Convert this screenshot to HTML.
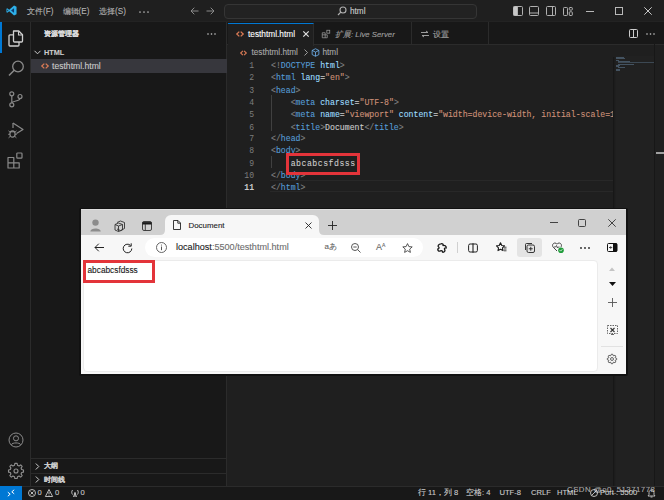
<!DOCTYPE html>
<html><head><meta charset="utf-8">
<style>
*{margin:0;padding:0;box-sizing:border-box}
html,body{width:664px;height:500px;overflow:hidden;background:#1f1f1f;font-family:"Liberation Sans",sans-serif;color:#cccccc}
.a{position:absolute}
.t{position:absolute;white-space:nowrap;line-height:1;-webkit-text-stroke:0.1px currentColor}
svg{position:absolute;overflow:visible}
#title{left:0;top:0;width:664px;height:22px;background:#1f1f1f;border-bottom:1px solid #232323}
#act{left:0;top:22px;width:31px;height:464px;background:#181818;border-right:1px solid #2b2b2b}
#side{left:31px;top:22px;width:196px;height:464px;background:#181818;border-right:1px solid #2b2b2b}
#tabs{left:227px;top:22px;width:437px;height:23px;background:#181818;border-bottom:1px solid #2b2b2b}
#status{left:0;top:486px;width:664px;height:14px;background:#181818;border-top:1px solid #2b2b2b}
.code{font-family:"Liberation Mono",monospace;font-size:8.2px;line-height:10.32px;white-space:pre;transform:scaleY(1.18);-webkit-text-stroke:0.1px currentColor;transform-origin:0 0}
.ln{position:absolute;left:227px;width:27px;text-align:right;font-family:"Liberation Mono",monospace;font-size:8.1px;color:#7d7d7d;line-height:10.32px;transform:scaleY(1.18);transform-origin:0 0}
.br{color:#808080}.tg{color:#569cd6}.at{color:#9cdcfe}.st{color:#ce9178}.tx{color:#cccccc}
#browser{left:81px;top:209px;width:545px;height:164.5px;background:#f7f7f7;overflow:hidden}
.menu{font-size:8.2px;color:#b4b4b4;top:7.7px}
</style></head><body>
<!-- ===== TITLE BAR ===== -->
<div class="a" id="title"></div>
<svg style="left:6px;top:5px" width="11" height="11" viewBox="0 0 24 24"><path d="M17.5 7 L11.2 12 L17.5 17 Z" fill="#0b3a78"/><path d="M17.5 1 L23 3.6 V20.4 L17.5 23 L7 13.5 L2.8 16.8 L1 15.9 V8.1 L2.8 7.2 L7 10.5 Z M17.5 7 L11.2 12 L17.5 17 Z M2.9 9.6 V14.4 L5.4 12 Z" fill="#2db0ea" fill-rule="evenodd"/></svg>
<div class="t menu" style="left:27px">文件(F)</div>
<div class="t menu" style="left:62.5px">编辑(E)</div>
<div class="t menu" style="left:99px">选择(S)</div>
<svg style="left:139px;top:10.5px" width="10" height="2" viewBox="0 0 10 2"><circle cx="1" cy="1" r="0.85" fill="#b4b4b4"/><circle cx="5" cy="1" r="0.85" fill="#b4b4b4"/><circle cx="9" cy="1" r="0.85" fill="#b4b4b4"/></svg>
<svg style="left:190px;top:7px" width="9" height="8" viewBox="0 0 9 8"><path d="M8.5 4H1M4.3 0.7 L1 4 L4.3 7.3" stroke="#8b8b8b" stroke-width="1" fill="none"/></svg>
<svg style="left:206px;top:7px" width="9" height="8" viewBox="0 0 9 8"><path d="M0.5 4H8M4.7 0.7 L8 4 L4.7 7.3" stroke="#8b8b8b" stroke-width="1" fill="none"/></svg>
<div class="a" style="left:224px;top:4px;width:253px;height:15px;background:#222222;border:1px solid #353535;border-radius:4px"></div>
<svg style="left:337px;top:6px" width="10" height="10" viewBox="0 0 10 10"><circle cx="6" cy="4" r="3" stroke="#b0b0b0" stroke-width="1.1" fill="none"/><path d="M3.8 6.2 L1 9" stroke="#b0b0b0" stroke-width="1.2"/></svg>
<div class="t" style="left:350px;top:8px;font-size:8.2px;color:#cccccc">html</div>
<!-- layout icons -->
<svg style="left:513px;top:6px" width="10" height="10" viewBox="0 0 10 10"><rect x="0.5" y="0.5" width="9" height="9" rx="1" stroke="#b0b0b0" fill="none"/><rect x="0.5" y="0.5" width="3.5" height="9" fill="#c8c8c8"/><path d="M4.5 0.5V9.5" stroke="#b0b0b0"/></svg>
<svg style="left:529px;top:6px" width="10" height="10" viewBox="0 0 10 10"><rect x="0.5" y="0.5" width="9" height="9" rx="1" stroke="#b0b0b0" fill="none"/><path d="M0.5 7H9.5" stroke="#b0b0b0"/></svg>
<svg style="left:545.5px;top:6px" width="10" height="10" viewBox="0 0 10 10"><rect x="0.5" y="0.5" width="9" height="9" rx="1" stroke="#b0b0b0" fill="none"/><path d="M6.5 0.5V9.5" stroke="#b0b0b0"/></svg>
<svg style="left:563px;top:6.5px" width="10" height="9" viewBox="0 0 10 9"><rect x="0.5" y="0.5" width="4" height="8" rx="0.8" stroke="#b0b0b0" fill="none"/><rect x="6.3" y="0.5" width="3" height="2.6" rx="0.6" stroke="#b0b0b0" fill="none"/><rect x="6.3" y="4.8" width="3" height="3.7" rx="0.6" stroke="#b0b0b0" fill="none"/></svg>
<svg style="left:586px;top:11px" width="8" height="1" viewBox="0 0 8 1"><path d="M0 0.5H8" stroke="#b8b8b8"/></svg>
<svg style="left:615px;top:7px" width="8" height="8" viewBox="0 0 8 8"><rect x="0.5" y="0.5" width="7" height="7" stroke="#b8b8b8" fill="none"/></svg>
<svg style="left:644px;top:7px" width="8" height="8" viewBox="0 0 8 8"><path d="M0.3 0.3L7.7 7.7M7.7 0.3L0.3 7.7" stroke="#c8c8c8" stroke-width="1"/></svg>

<!-- ===== ACTIVITY BAR ===== -->
<div class="a" id="act"></div>
<div class="a" style="left:0;top:22px;width:2px;height:31px;background:#0078d4"></div>
<!-- explorer -->
<svg style="left:7.5px;top:29.5px" width="16" height="17" viewBox="0 0 16 17"><path d="M5.5 1 H10.8 L14.5 4.7 V11 Q14.5 12 13.5 12 H6.5 Q5.5 12 5.5 11 Z" stroke="#d0d0d0" stroke-width="1.3" fill="none" stroke-linejoin="round"/><path d="M10.5 1.2 V5 H14.3" stroke="#d0d0d0" stroke-width="1.1" fill="none"/><path d="M5.5 4.8 H2 Q1 4.8 1 5.8 V15 Q1 16 2 16 H10 Q11 16 11 15 V12" stroke="#d0d0d0" stroke-width="1.3" fill="none" stroke-linejoin="round"/></svg>
<!-- search -->
<svg style="left:8px;top:59.5px" width="16" height="17" viewBox="0 0 16 17"><circle cx="10" cy="6.5" r="5.3" stroke="#8a8a8a" stroke-width="1.3" fill="none"/><path d="M6.2 10.3 L1 15.5" stroke="#8a8a8a" stroke-width="1.5"/></svg>
<!-- scm -->
<svg style="left:8.5px;top:90.5px" width="14" height="17" viewBox="0 0 14 17"><circle cx="2.8" cy="2.8" r="2" stroke="#8a8a8a" stroke-width="1.2" fill="none"/><circle cx="2.8" cy="13.8" r="2" stroke="#8a8a8a" stroke-width="1.2" fill="none"/><circle cx="11" cy="5.5" r="2" stroke="#8a8a8a" stroke-width="1.2" fill="none"/><path d="M2.8 4.8V11.8M11 7.5C11 10.5 4 9.5 2.8 11.8" stroke="#8a8a8a" stroke-width="1.2" fill="none"/></svg>
<!-- run debug -->
<svg style="left:7.5px;top:121.5px" width="16" height="17" viewBox="0 0 16 17"><path d="M5 1 L15 7.5 L8.5 11.5" stroke="#8a8a8a" stroke-width="1.2" fill="none" stroke-linejoin="round"/><path d="M5 1V6" stroke="#8a8a8a" stroke-width="1.2"/><ellipse cx="4.5" cy="12" rx="2.6" ry="3.2" stroke="#8a8a8a" stroke-width="1.2" fill="none"/><path d="M1.9 10 L0.5 8.8 M7.1 10 L8.5 8.8 M1.9 12.3H0.2 M7.1 12.3H8.8 M2 14.5L0.6 15.8 M7 14.5 L8.4 15.8 M2.5 9.8H6.5" stroke="#8a8a8a" stroke-width="1"/></svg>
<!-- extensions -->
<svg style="left:7px;top:152px" width="16" height="17" viewBox="0 0 16 17"><path d="M1 5.5 H6.8 V10.8 H12.2 V16 H1 Z M1 10.8 H6.8 V16" stroke="#8a8a8a" stroke-width="1.2" fill="none" stroke-linejoin="round"/><rect x="9.8" y="1" width="5.2" height="5.2" rx="0.8" stroke="#8a8a8a" stroke-width="1.2" fill="none"/></svg>
<!-- accounts -->
<svg style="left:7.5px;top:432px" width="16" height="16" viewBox="0 0 24 24"><circle cx="12" cy="12" r="10.5" stroke="#8a8a8a" stroke-width="1.5" fill="none"/><circle cx="12" cy="9.5" r="3.8" stroke="#8a8a8a" stroke-width="1.5" fill="none"/><path d="M5 19 C6.5 15.5 17.5 15.5 19 19" stroke="#8a8a8a" stroke-width="1.5" fill="none"/></svg>
<!-- manage gear -->
<svg style="left:7.5px;top:462.5px" width="16" height="16" viewBox="0 0 24 24"><path d="M10.3 1.8 H13.7 L14.3 4.6 L16.6 5.6 L19 4 L21.2 6.4 L19.6 8.8 L20.5 11 L23.2 11.6 V14.9 L20.5 15.5 L19.6 17.7 L21.2 20.1 L19 22.4 L16.6 20.8 L14.3 21.8 L13.7 24.5 H10.3 L9.7 21.8 L7.4 20.8 L5 22.4 L2.8 20.1 L4.4 17.7 L3.5 15.5 L0.8 14.9 V11.6 L3.5 11 L4.4 8.8 L2.8 6.4 L5 4 L7.4 5.6 L9.7 4.6 Z" transform="translate(0,-1.2)" stroke="#8f8f8f" stroke-width="1.7" fill="none" stroke-linejoin="round"/><circle cx="12" cy="12" r="3" stroke="#8f8f8f" stroke-width="1.7" fill="none"/></svg>

<!-- ===== SIDEBAR ===== -->
<div class="a" id="side"></div>
<div class="t" style="left:44px;top:30px;font-size:7px;color:#dddddd;font-weight:bold">资源管理器</div>
<svg style="left:207px;top:33px" width="9" height="2" viewBox="0 0 9 2"><circle cx="1" cy="1" r="0.8" fill="#cccccc"/><circle cx="4.5" cy="1" r="0.8" fill="#cccccc"/><circle cx="8" cy="1" r="0.8" fill="#cccccc"/></svg>
<svg style="left:34px;top:50px" width="7" height="5" viewBox="0 0 7 5"><path d="M0.5 0.8 L3.5 3.8 L6.5 0.8" stroke="#cccccc" stroke-width="1" fill="none"/></svg>
<div class="t" style="left:44px;top:48.5px;font-size:7.3px;font-weight:bold;color:#cccccc">HTML</div>
<div class="a" style="left:31px;top:59px;width:196px;height:14px;background:#37373d"></div>
<svg style="left:41px;top:63px" width="8" height="6" viewBox="0 0 8 6"><path d="M3.3 0.6 L0.8 3 L3.3 5.4 M4.7 0.6 L7.2 3 L4.7 5.4" stroke="#d97a55" stroke-width="1.3" fill="none"/></svg>
<div class="t" style="left:52px;top:61.5px;font-size:8.6px;color:#cccccc">testhtml.html</div>
<!-- bottom sections -->
<div class="a" style="left:31px;top:458px;width:196px;height:1px;background:#2b2b2b"></div>
<div class="a" style="left:31px;top:473px;width:196px;height:1px;background:#2b2b2b"></div>
<svg style="left:35px;top:462.5px" width="5" height="7" viewBox="0 0 5 7"><path d="M0.8 0.5 L3.8 3.5 L0.8 6.5" stroke="#cccccc" stroke-width="1" fill="none"/></svg>
<div class="t" style="left:44px;top:462px;font-size:7px;font-weight:bold;color:#cccccc">大纲</div>
<svg style="left:35px;top:476px" width="5" height="7" viewBox="0 0 5 7"><path d="M0.8 0.5 L3.8 3.5 L0.8 6.5" stroke="#cccccc" stroke-width="1" fill="none"/></svg>
<div class="t" style="left:44px;top:475.5px;font-size:7px;font-weight:bold;color:#cccccc">时间线</div>

<!-- ===== EDITOR ===== -->
<div class="a" id="tabs"></div>
<div class="a" style="left:228px;top:22.5px;width:86px;height:23.5px;background:#1f1f1f;border-top:1px solid #0078d4;border-right:1px solid #2b2b2b"></div>
<svg style="left:236px;top:30.5px" width="8" height="6" viewBox="0 0 8 6"><path d="M3.3 0.6 L0.8 3 L3.3 5.4 M4.7 0.6 L7.2 3 L4.7 5.4" stroke="#d97a55" stroke-width="1.3" fill="none"/></svg>
<div class="t" style="left:248px;top:30px;font-size:8.3px;color:#ffffff">testhtml.html</div>
<svg style="left:303px;top:30.7px" width="6" height="6" viewBox="0 0 6 6"><path d="M0.3 0.3L5.7 5.7M5.7 0.3L0.3 5.7" stroke="#e0e0e0" stroke-width="1.2"/></svg>
<!-- tab 2 -->
<div class="a" style="left:411px;top:22px;width:1px;height:22px;background:#2b2b2b"></div>
<svg style="left:321px;top:28.5px" width="10" height="10" viewBox="0 0 24 24"><path d="M3 9 H10 V14 H15 V21 H3 Z M3 14 H10 V21" stroke="#9d9d9d" stroke-width="1.8" fill="none"/><rect x="14" y="3" width="7" height="7" stroke="#9d9d9d" stroke-width="1.8" fill="none"/></svg>
<div class="t" style="left:335px;top:31px;font-size:7.8px;color:#a0a0a0;font-style:italic">扩展: Live Server</div>
<!-- tab 3 -->
<div class="a" style="left:488px;top:22px;width:1px;height:22px;background:#2b2b2b"></div>
<svg style="left:420.5px;top:30.5px" width="8" height="6" viewBox="0 0 8 6"><path d="M0 1.5H7M5 0L7 1.5M8 4.5H1M3 6L1 4.5" stroke="#9d9d9d" stroke-width="1" fill="none"/></svg>
<div class="t" style="left:433px;top:31px;font-size:8px;color:#a0a0a0">设置</div>
<!-- editor actions -->
<svg style="left:629px;top:29px" width="9" height="9" viewBox="0 0 9 9"><rect x="0.5" y="0.5" width="8" height="8" rx="1" stroke="#cccccc" fill="none"/><path d="M4.5 0.5V8.5" stroke="#cccccc"/></svg>
<svg style="left:645.5px;top:33px" width="9" height="2" viewBox="0 0 9 2"><circle cx="1" cy="1" r="0.8" fill="#cccccc"/><circle cx="4.5" cy="1" r="0.8" fill="#cccccc"/><circle cx="8" cy="1" r="0.8" fill="#cccccc"/></svg>
<!-- breadcrumbs -->
<svg style="left:240px;top:50px" width="7" height="6" viewBox="0 0 8 6"><path d="M3.3 0.6 L0.8 3 L3.3 5.4 M4.7 0.6 L7.2 3 L4.7 5.4" stroke="#d97a55" stroke-width="1.3" fill="none"/></svg>
<div class="t" style="left:251.5px;top:49px;font-size:8.2px;color:#a9a9a9">testhtml.html</div>
<svg style="left:304px;top:48.5px" width="4" height="7" viewBox="0 0 4 7"><path d="M0.5 0.5 L3.5 3.5 L0.5 6.5" stroke="#a9a9a9" stroke-width="0.9" fill="none"/></svg>
<svg style="left:311px;top:48px" width="9" height="9" viewBox="0 0 24 24"><path d="M12 2 L21 6.5 V17.5 L12 22 L3 17.5 V6.5 Z M3 6.5 L12 11 L21 6.5 M12 11V22" stroke="#75beff" stroke-width="2" fill="none" stroke-linejoin="round"/></svg>
<div class="t" style="left:322.5px;top:49px;font-size:8.2px;color:#a9a9a9">html</div>

<!-- line highlight line 11 -->
<div class="a" style="left:270px;top:180px;width:344px;height:12px;border-top:1px solid #282828;border-bottom:1px solid #282828"></div>
<!-- indent guides -->
<div class="a" style="left:271px;top:95px;width:1px;height:36px;background:#404040"></div>
<div class="a" style="left:271px;top:156px;width:1px;height:12px;background:#404040"></div>
<div class="ln" style="top:59.6px">1<br>2<br>3<br>4<br>5<br>6<br>7<br>8<br>9<br>10<br><span style="color:#cccccc;font-weight:bold">11</span></div>
<div class="a code" style="left:271px;top:59.6px;width:343px;overflow:hidden"><span class="br">&lt;!</span><span class="tg">DOCTYPE</span> <span class="at">html</span><span class="br">&gt;</span>
<span class="br">&lt;</span><span class="tg">html</span> <span class="at">lang</span>=<span class="st">"en"</span><span class="br">&gt;</span>
<span class="br">&lt;</span><span class="tg">head</span><span class="br">&gt;</span>
    <span class="br">&lt;</span><span class="tg">meta</span> <span class="at">charset</span>=<span class="st">"UTF-8"</span><span class="br">&gt;</span>
    <span class="br">&lt;</span><span class="tg">meta</span> <span class="at">name</span>=<span class="st">"viewport"</span> <span class="at">content</span>=<span class="st">"width=device-width, initial-scale=1.0"</span><span class="br">&gt;</span>
    <span class="br">&lt;</span><span class="tg">title</span><span class="br">&gt;</span>Document<span class="br">&lt;/</span><span class="tg">title</span><span class="br">&gt;</span>
<span class="br">&lt;/</span><span class="tg">head</span><span class="br">&gt;</span>
<span class="br">&lt;</span><span class="tg">body</span><span class="br">&gt;</span>
    <span style="letter-spacing:0.5px;position:relative;top:0.6px">abcabcsfdsss</span>
<span class="br">&lt;/</span><span class="tg">body</span><span class="br">&gt;</span>
<span class="br">&lt;/</span><span class="tg">html</span><span class="br">&gt;</span></div>
<div class="a" style="left:286px;top:153px;width:74px;height:22px;border:3px solid #e3343a"></div>
<!-- minimap -->
<div class="a" style="left:613px;top:57px;width:2px;height:429px;background:linear-gradient(to right,#141414,#1f1f1f)"></div>
<div class="a" style="left:616.0px;top:57.0px;width:8.2px;height:1px;background:#6d8fb0;opacity:0.45"></div>
<div class="a" style="left:616.0px;top:58.3px;width:8.8px;height:1px;background:#6d8fb0;opacity:0.45"></div>
<div class="a" style="left:616.0px;top:59.6px;width:3.3px;height:1px;background:#6d8fb0;opacity:0.45"></div>
<div class="a" style="left:618.2px;top:60.9px;width:12.1px;height:1px;background:#6d8fb0;opacity:0.45"></div>
<div class="a" style="left:618.2px;top:62.2px;width:35.8px;height:1px;background:#6d8fb0;opacity:0.35"></div>
<div class="a" style="left:618.2px;top:63.5px;width:15.4px;height:1px;background:#6d8fb0;opacity:0.45"></div>
<div class="a" style="left:616.0px;top:64.8px;width:3.9px;height:1px;background:#6d8fb0;opacity:0.45"></div>
<div class="a" style="left:616.0px;top:66.1px;width:3.3px;height:1px;background:#6d8fb0;opacity:0.45"></div>
<div class="a" style="left:618.2px;top:67.4px;width:6.6px;height:1px;background:#6d8fb0;opacity:0.45"></div>
<div class="a" style="left:616.0px;top:68.7px;width:3.9px;height:1px;background:#6d8fb0;opacity:0.45"></div>
<div class="a" style="left:616.0px;top:70.0px;width:3.9px;height:1px;background:#6d8fb0;opacity:0.45"></div>
<div class="a" style="left:616px;top:56px;width:38px;height:430px;background:rgba(255,255,255,0.012)"></div>
<div class="a" style="left:654px;top:44px;width:1px;height:442px;background:#171717"></div>
<div class="a" style="left:656px;top:152px;width:8px;height:2px;background:#a0a0a0"></div>

<!-- ===== STATUS BAR ===== -->
<div class="a" id="status"></div>
<div class="a" style="left:0;top:486px;width:22px;height:14px;background:#0078d4"></div>
<svg style="left:7px;top:489px" width="8" height="8" viewBox="0 0 8 8"><path d="M0.8 3.2 L3.2 5.2 L0.8 7.2 M7.2 0.8 L4.8 2.8 L7.2 4.8" stroke="#fff" stroke-width="1" fill="none"/></svg>
<svg style="left:27.5px;top:489px" width="8" height="8" viewBox="0 0 8 8"><circle cx="4" cy="4" r="3.5" stroke="#cccccc" stroke-width="0.9" fill="none"/><path d="M2.5 2.5L5.5 5.5M5.5 2.5L2.5 5.5" stroke="#cccccc" stroke-width="0.9"/></svg>
<div class="t" style="left:37.5px;top:489px;font-size:7.6px;color:#cccccc">0</div>
<svg style="left:45px;top:489px" width="8" height="8" viewBox="0 0 8 8"><path d="M4 0.5 L7.6 7.5 H0.4 Z M4 3V5.3M4 6V6.6" stroke="#cccccc" stroke-width="0.9" fill="none"/></svg>
<div class="t" style="left:55px;top:489px;font-size:7.6px;color:#cccccc">0</div>
<svg style="left:71px;top:489px" width="8" height="8" viewBox="0 0 8 8"><path d="M4 3.5V8M2.5 8L4 3.5L5.5 8M1.5 1C0.5 2.5 0.5 4 1.5 5.5M6.5 1C7.5 2.5 7.5 4 6.5 5.5" stroke="#cccccc" stroke-width="0.9" fill="none"/></svg>
<div class="t" style="left:80.5px;top:489px;font-size:7.6px;color:#cccccc">0</div>
<div class="t" style="left:418px;top:489px;font-size:7.6px;color:#cccccc">行 11，列 8</div>
<div class="t" style="left:466px;top:489px;font-size:7.6px;color:#cccccc">空格: 4</div>
<div class="t" style="left:499.5px;top:489px;font-size:7.6px;color:#cccccc">UTF-8</div>
<div class="t" style="left:531px;top:489px;font-size:7.6px;color:#cccccc">CRLF</div>
<div class="t" style="left:557px;top:489px;font-size:7.6px;color:#cccccc">HTML</div>
<svg style="left:590px;top:489px" width="8" height="8" viewBox="0 0 8 8"><circle cx="4" cy="4" r="3.5" stroke="#cccccc" stroke-width="0.9" fill="none"/><path d="M1.5 6.5L6.5 1.5" stroke="#cccccc" stroke-width="0.9"/></svg>
<div class="t" style="left:600px;top:489px;font-size:7.6px;color:#cccccc">Port : 5500</div>
<svg style="left:647px;top:488.5px" width="9" height="9" viewBox="0 0 9 9"><path d="M1 7H8L7 5.5V3.5C7 2 6 1 4.5 1S2 2 2 3.5V5.5Z M3.5 8H5.5" stroke="#cccccc" stroke-width="0.9" fill="none"/></svg>
<div class="t" style="left:567px;top:485.5px;font-size:7.8px;letter-spacing:0.5px;color:rgba(255,255,255,0.6)">CSDN @o0_51371778</div>

<!-- ===== BROWSER ===== -->
<div class="a" style="left:79px;top:207.5px;width:549px;height:168px;background:#111;border-radius:2px"></div>
<div class="a" id="browser">
  <div class="a" style="left:0;top:0;width:545px;height:26px;background:#d0d0d0;border-top:1px solid #dedede"></div>
  <!-- profile -->
  <svg style="left:9px;top:10px" width="11" height="13" viewBox="0 0 11 13"><circle cx="5.5" cy="3.6" r="3.2" fill="#8c8c8c"/><path d="M0.3 12.5 C0.3 8.5 10.7 8.5 10.7 12.5 Z" fill="#8c8c8c"/></svg>
  <!-- workspaces -->
  <svg style="left:33px;top:11px" width="12" height="12" viewBox="0 0 12 12"><path d="M3 2.5 L6.5 1 L10.5 2.5 V8.5 L6.5 10.5 L3 9" stroke="#333" stroke-width="0.9" fill="none"/><path d="M1 4.5 L4.5 3 L8.5 4.5 V10 L4.5 11.5 L1 10 Z M1 4.5 L4.5 6 L8.5 4.5 M4.5 6V11.5" stroke="#333" stroke-width="0.9" fill="none"/></svg>
  <!-- tab actions -->
  <svg style="left:61px;top:11.5px" width="10" height="10" viewBox="0 0 10 10"><rect x="0.5" y="0.5" width="9" height="9" rx="1.5" stroke="#333" stroke-width="0.9" fill="none"/><path d="M0.5 2.3H9.5" stroke="#1a1a1a" stroke-width="2.4"/><path d="M3.3 3V9.5" stroke="#333" stroke-width="0.9"/></svg>
  <!-- active tab -->
  <div class="a" style="left:84px;top:6px;width:154px;height:21px;background:#f7f7f7;border-radius:6px 6px 0 0"></div>
  <svg style="left:79px;top:21px" width="5" height="5" viewBox="0 0 5 5"><path d="M0 5 Q5 5 5 0 V5 Z" fill="#f7f7f7"/></svg>
  <svg style="left:238px;top:21px" width="5" height="5" viewBox="0 0 5 5"><path d="M5 5 Q0 5 0 0 V5 Z" fill="#f7f7f7"/></svg>
  <svg style="left:92px;top:11px" width="8" height="10" viewBox="0 0 8 10"><path d="M0.5 0.5 H5 L7.5 3 V9.5 H0.5 Z M4.8 0.5 V3.2 H7.5" stroke="#222" stroke-width="0.9" fill="none" stroke-linejoin="round"/></svg>
  <div class="t" style="left:107.5px;top:12.8px;font-size:7.9px;color:#1a1a1a">Document</div>
  <svg style="left:224px;top:13px" width="7" height="7" viewBox="0 0 7 7"><path d="M0.5 0.5L6.5 6.5M6.5 0.5L0.5 6.5" stroke="#222" stroke-width="0.9"/></svg>
  <svg style="left:246.5px;top:12px" width="9" height="9" viewBox="0 0 9 9"><path d="M4.5 0V9M0 4.5H9" stroke="#222" stroke-width="0.9"/></svg>
  <!-- window controls -->
  <svg style="left:468.5px;top:13px" width="8" height="1" viewBox="0 0 8 1"><path d="M0 0.5H8" stroke="#333" stroke-width="0.9"/></svg>
  <svg style="left:497px;top:9.5px" width="8" height="8" viewBox="0 0 8 8"><rect x="0.5" y="0.5" width="7" height="7" rx="1" stroke="#333" stroke-width="0.9" fill="none"/></svg>
  <svg style="left:527px;top:9.5px" width="8" height="8" viewBox="0 0 8 8"><path d="M0.3 0.3L7.7 7.7M7.7 0.3L0.3 7.7" stroke="#333" stroke-width="0.9"/></svg>

  <!-- toolbar -->
  <div class="a" style="left:0;top:26px;width:545px;height:24px;background:#f7f7f7"></div>
  <svg style="left:12.5px;top:34px" width="10" height="9" viewBox="0 0 10 9"><path d="M10 4.5H1M4.8 0.7 L1 4.5 L4.8 8.3" stroke="#222" stroke-width="1" fill="none"/></svg>
  <svg style="left:40.5px;top:33.5px" width="11" height="11" viewBox="0 0 11 11"><path d="M9.8 5.5 A4.3 4.3 0 1 1 8.5 2.4" stroke="#222" stroke-width="1" fill="none"/><path d="M9.2 0.3 V3.2 H6.3" stroke="#222" stroke-width="1" fill="none"/></svg>
  <div class="a" style="left:64px;top:28.5px;width:278px;height:19px;background:#ffffff;border-radius:10px"></div>
  <svg style="left:75px;top:33px" width="11" height="11" viewBox="0 0 11 11"><circle cx="5.5" cy="5.5" r="5" stroke="#555" stroke-width="0.9" fill="none"/><path d="M5.5 4.5V8.2" stroke="#555" stroke-width="1"/><circle cx="5.5" cy="3" r="0.6" fill="#555"/></svg>
  <div class="t" style="left:95px;top:34px;font-size:9.1px;color:#1a1a1a">localhost<span style="color:#6d6d6d">:5500/testhtml.html</span></div>
  <div class="t" style="left:243.5px;top:33.5px;font-size:8px;color:#666">a<span style="font-size:7.5px">あ</span></div>
  <svg style="left:270px;top:34px" width="10" height="10" viewBox="0 0 10 10"><circle cx="4" cy="4" r="3.5" stroke="#444" stroke-width="0.9" fill="none"/><path d="M2.3 4H5.7M6.6 6.6L9.5 9.5" stroke="#444" stroke-width="0.9"/></svg>
  <div class="t" style="left:295px;top:33.5px;font-size:9px;color:#666">A<span style="font-size:5px;vertical-align:top">A</span></div>
  <svg style="left:320.5px;top:33.5px" width="11" height="10" viewBox="0 0 11 10"><path d="M5.5 0.6 L6.9 3.6 L10.2 3.9 L7.7 6.1 L8.4 9.4 L5.5 7.7 L2.6 9.4 L3.3 6.1 L0.8 3.9 L4.1 3.6 Z" stroke="#444" stroke-width="0.9" fill="none" stroke-linejoin="round"/></svg>
  <svg style="left:355.5px;top:33.5px" width="10" height="10" viewBox="0 0 10 10"><path d="M4 0.8 C5.5 0.2 6.5 1.5 6 2.5 C7.5 2 9.5 3 9.2 5 C8 4.5 7 5.5 7.6 6.5 C8.5 7.8 7.5 9.5 5.5 9.2 C5.8 8 4.5 7.2 3.5 7.8 C2 8.8 0.5 7.5 0.8 6 C2 6 2.5 4.5 1.5 3.8 C0.5 3 1.5 1 4 0.8 Z" stroke="#1a1a1a" stroke-width="1.35" fill="none" stroke-linejoin="round"/></svg>
  <div class="a" style="left:375.5px;top:32.5px;width:1px;height:11px;background:#d0d0d0"></div>
  <svg style="left:386.5px;top:33.5px" width="10" height="10" viewBox="0 0 10 10"><rect x="0.6" y="1" width="8.8" height="8" rx="1.5" stroke="#222" stroke-width="1" fill="none"/><path d="M5 0.2 V9.8" stroke="#222" stroke-width="1.1"/></svg>
  <svg style="left:414.5px;top:33px" width="11" height="11" viewBox="0 0 11 11"><path d="M4.5 0.8 L5.8 3.5 L8.5 3.8 L6.5 5.8 L7 8.6 L4.5 7.2 L2 8.6 L2.5 5.8 L0.5 3.8 L3.2 3.5 Z" stroke="#1a1a1a" stroke-width="1.1" fill="none" stroke-linejoin="round"/><path d="M7.8 5.2H10.5M8 7H10.5M8 8.8H10.5" stroke="#333" stroke-width="0.9"/></svg>
  <div class="a" style="left:435.5px;top:28.5px;width:25px;height:19.5px;background:#e4e4e4;border-radius:3px"></div>
  <svg style="left:443px;top:33px" width="11" height="11" viewBox="0 0 11 11"><rect x="3" y="3" width="7.5" height="7.5" rx="1.5" stroke="#222" stroke-width="0.9" fill="none"/><path d="M1.5 8 V2.5 Q1.5 1.5 2.5 1.5 H8" stroke="#222" stroke-width="0.9" fill="none"/><path d="M6.75 4.8V8.7M4.8 6.75H8.7" stroke="#222" stroke-width="0.9"/></svg>
  <svg style="left:471px;top:33px" width="12" height="11" viewBox="0 0 12 11"><path d="M5 9 L1.2 5.2 C-0.2 3.5 0.8 1 3 1 C4 1 4.6 1.6 5 2.2 C5.4 1.6 6 1 7 1 C9.2 1 10.2 3.5 8.8 5.2" stroke="#333" stroke-width="0.9" fill="none"/><path d="M2 5 H3.5 L4.5 3.5 L5.5 6 L6.3 5H7.5" stroke="#333" stroke-width="0.8" fill="none"/><circle cx="9" cy="8.2" r="2.8" fill="#1f9c3a"/><path d="M7.7 8.2 L8.6 9.1 L10.3 7.3" stroke="#fff" stroke-width="0.8" fill="none"/></svg>
  <svg style="left:499px;top:37.5px" width="10" height="2" viewBox="0 0 10 2"><circle cx="1" cy="1" r="0.9" fill="#222"/><circle cx="5" cy="1" r="0.9" fill="#222"/><circle cx="9" cy="1" r="0.9" fill="#222"/></svg>
  <svg style="left:526px;top:34px" width="10.5" height="9" viewBox="0 0 10.5 9"><rect x="0.5" y="0.5" width="9.5" height="8" rx="1" stroke="#111" stroke-width="1" fill="none"/><rect x="6" y="0.5" width="4" height="8" fill="#111"/><path d="M2 4.5H4.5M3.5 3.3L4.7 4.5L3.5 5.7" stroke="#111" stroke-width="0.8" fill="none"/></svg>

  <!-- content -->
  <div class="a" style="left:1.5px;top:50.5px;width:515.5px;height:112px;background:#ffffff;border-radius:4px;border:1px solid #ebebeb"></div>
  <div class="a" style="left:2px;top:51px;width:72px;height:23px;border:3px solid #e3343a"></div>
  <div class="t" style="left:6.5px;top:57px;font-size:8.3px;color:#1a1a1a">abcabcsfdsss</div>
  <!-- right sidebar -->
  <svg style="left:528px;top:58px" width="6" height="4" viewBox="0 0 6 4"><path d="M0 4 L3 0.5 L6 4Z" fill="#c4c4c4"/></svg>
  <svg style="left:528px;top:73px" width="7" height="4" viewBox="0 0 7 4"><path d="M0 0 L3.5 4 L7 0Z" fill="#111"/></svg>
  <svg style="left:527px;top:89px" width="9" height="9" viewBox="0 0 9 9"><path d="M4.5 0V9M0 4.5H9" stroke="#555" stroke-width="0.9"/></svg>
  <svg style="left:526px;top:116px" width="11" height="10" viewBox="0 0 11 10"><rect x="0.5" y="0.5" width="10" height="8" stroke="#555" stroke-width="0.9" stroke-dasharray="1.5 1" fill="none"/><path d="M3.5 3 L7.5 7 M7.5 3 L3.5 7" stroke="#333" stroke-width="1.1"/><path d="M4 9.5 H7" stroke="#555" stroke-width="0.9"/></svg>
  <div class="a" style="left:520px;top:136.5px;width:22px;height:1px;background:#e2e2e2"></div>
  <svg style="left:526px;top:145px" width="10" height="10" viewBox="0 0 24 24"><path d="M10.3 1.8 H13.7 L14.3 4.6 L16.6 5.6 L19 4 L21.2 6.4 L19.6 8.8 L20.5 11 L23.2 11.6 V14.9 L20.5 15.5 L19.6 17.7 L21.2 20.1 L19 22.4 L16.6 20.8 L14.3 21.8 L13.7 24.5 H10.3 L9.7 21.8 L7.4 20.8 L5 22.4 L2.8 20.1 L4.4 17.7 L3.5 15.5 L0.8 14.9 V11.6 L3.5 11 L4.4 8.8 L2.8 6.4 L5 4 L7.4 5.6 L9.7 4.6 Z" transform="translate(0,-1.2)" stroke="#444" stroke-width="2" fill="none" stroke-linejoin="round"/><circle cx="12" cy="12" r="3.5" stroke="#444" stroke-width="2" fill="none"/></svg>
</div>
</body></html>
